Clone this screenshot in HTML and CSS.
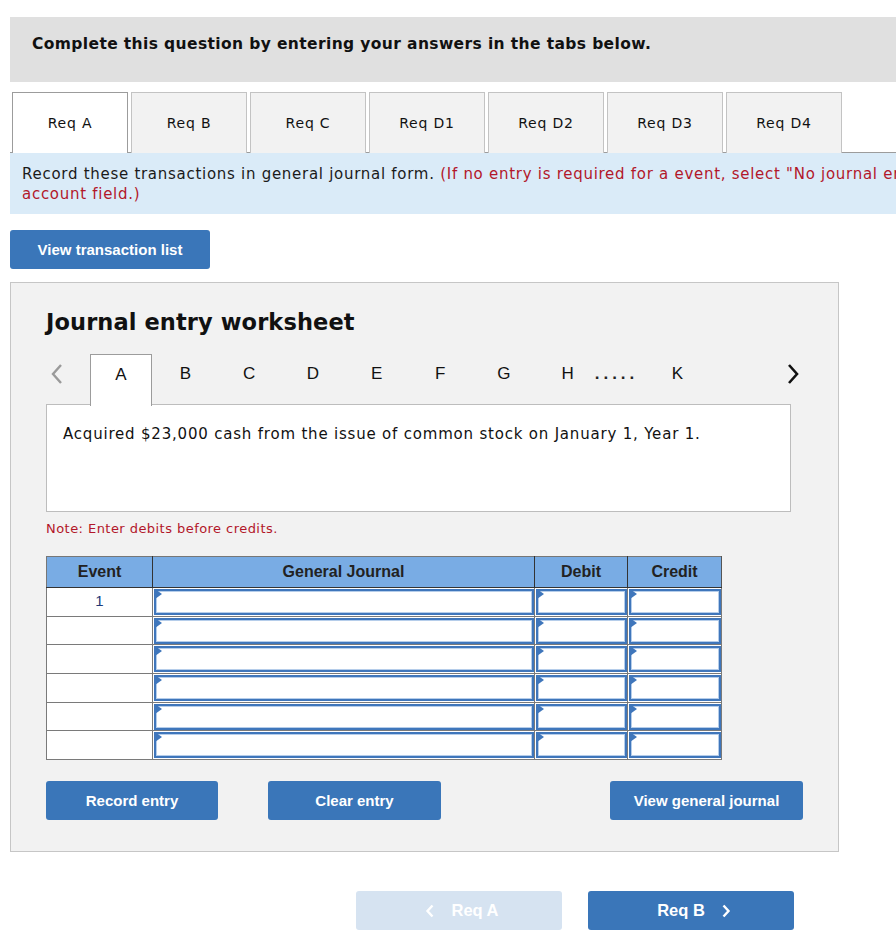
FILE: index.html
```html
<!DOCTYPE html>
<html>
<head>
<meta charset="utf-8">
<link rel="stylesheet" href="styles.css">
</head>
<body>
<div class="page">
  <div class="banner">Complete this question by entering your answers in the tabs below.</div>

  <div class="reqtabs">
    <div class="reqtab active">Req A</div>
    <div class="reqtab">Req B</div>
    <div class="reqtab">Req C</div>
    <div class="reqtab">Req D1</div>
    <div class="reqtab">Req D2</div>
    <div class="reqtab">Req D3</div>
    <div class="reqtab">Req D4</div>
  </div>

  <div class="instr">Record these transactions in general journal form. <span class="red">(If no entry is required for a event, select "No journal entry required" in the first<br>account field.)</span></div>

  <button class="btn btn-list">View transaction list</button>

  <div class="panel">
    <h2 class="title">Journal entry worksheet</h2>

    <div class="nav">
      <span class="chev chev-left"><svg width="14" height="22" viewBox="0 0 14 22"><path d="M11 2 L3 11 L11 20" fill="none" stroke="#9a9a9a" stroke-width="2.4"/></svg></span>
      <span class="slot active">A</span>
      <span class="slot">B</span>
      <span class="slot">C</span>
      <span class="slot">D</span>
      <span class="slot">E</span>
      <span class="slot">F</span>
      <span class="slot">G</span>
      <span class="slot">H</span>
      <span class="dots">.....</span>
      <span class="slot slot-k">K</span>
      <span class="chev chev-right"><svg width="14" height="22" viewBox="0 0 14 22"><path d="M3 2 L11 11 L3 20" fill="none" stroke="#111" stroke-width="2.6"/></svg></span>
    </div>

    <div class="desc">Acquired $23,000 cash from the issue of common stock on January 1, Year 1.</div>

    <div class="note">Note: Enter debits before credits.</div>

    <table class="journal">
      <thead>
        <tr>
          <th class="c-event">Event</th>
          <th class="c-gj">General Journal</th>
          <th class="c-amt">Debit</th>
          <th class="c-amt2">Credit</th>
        </tr>
      </thead>
      <tbody>
        <tr><td class="ev">1</td><td class="in"><div class="box"></div></td><td class="in"><div class="box"></div></td><td class="in"><div class="box"></div></td></tr>
        <tr><td class="ev"></td><td class="in"><div class="box"></div></td><td class="in"><div class="box"></div></td><td class="in"><div class="box"></div></td></tr>
        <tr><td class="ev"></td><td class="in"><div class="box"></div></td><td class="in"><div class="box"></div></td><td class="in"><div class="box"></div></td></tr>
        <tr><td class="ev"></td><td class="in"><div class="box"></div></td><td class="in"><div class="box"></div></td><td class="in"><div class="box"></div></td></tr>
        <tr><td class="ev"></td><td class="in"><div class="box"></div></td><td class="in"><div class="box"></div></td><td class="in"><div class="box"></div></td></tr>
        <tr><td class="ev"></td><td class="in"><div class="box"></div></td><td class="in"><div class="box"></div></td><td class="in"><div class="box"></div></td></tr>
      </tbody>
    </table>

    <div class="actions">
      <button class="btn btn-record">Record entry</button>
      <button class="btn btn-clear">Clear entry</button>
      <button class="btn btn-view">View general journal</button>
    </div>
  </div>

  <div class="bottom">
    <button class="btn btn-prev"><svg width="10" height="14" viewBox="0 0 10 14"><path d="M7.5 1.5 L2.5 7 L7.5 12.5" fill="none" stroke="#fff" stroke-width="2.4"/></svg><span>Req A</span></button>
    <button class="btn btn-next"><span>Req B</span><svg width="10" height="14" viewBox="0 0 10 14"><path d="M2.5 1.5 L7.5 7 L2.5 12.5" fill="none" stroke="#fff" stroke-width="2.4"/></svg></button>
  </div>
</div>
</body>
</html>
```

FILE: styles.css
```css
html, body {
  margin: 0;
  padding: 0;
  background: #ffffff;
  overflow: hidden;
}

.page {
  width: 1100px;
  padding: 17px 0 20px 10px;
  font-family: "DejaVu Sans", Verdana, sans-serif;
  color: #111;
}

.banner {
  background: #e0e0e0;
  height: 65px;
  box-sizing: border-box;
  padding: 18px 0 0 22px;
  font-size: 15.5px;
  font-weight: bold;
  letter-spacing: 0.38px;
}

.reqtabs {
  display: flex;
  gap: 3px;
  margin-top: 10px;
  padding-left: 2px;
  position: relative;
  z-index: 1;
}

.reqtab {
  width: 116px;
  height: 61px;
  box-sizing: border-box;
  border: 1px solid #c3c3c3;
  border-bottom: none;
  background: #f2f2f2;
  font-size: 14px;
  letter-spacing: 0.8px;
  display: flex;
  align-items: center;
  justify-content: center;
}

.reqtab.active {
  background: #ffffff;
  border-color: #9c9c9c;
}

.instr {
  background: #daebf8;
  border-top: 1px solid #9c9c9c;
  margin-top: -1px;
  height: 62px;
  box-sizing: border-box;
  padding: 12px 12px 0 12px;
  font-size: 15px;
  line-height: 19.5px;
  width: 1080px;
  white-space: nowrap;
  color: #1a1a1a;
  letter-spacing: 0.72px;
}

.instr .red {
  color: #b2172a;
}

.btn {
  border: none;
  border-radius: 3px;
  background: #3a76b9;
  color: #ffffff;
  font-family: "Liberation Sans", Arial, sans-serif;
  font-weight: bold;
  font-size: 15px;
  height: 39px;
  padding: 0;
  display: flex;
  align-items: center;
  justify-content: center;
  letter-spacing: 0;
}

.btn-list {
  margin-top: 16px;
  width: 200px;
}

.panel {
  margin-top: 13px;
  width: 829px;
  height: 570px;
  box-sizing: border-box;
  background: #f2f2f2;
  border: 1px solid #c6c6c6;
  padding: 0 0 0 35px;
}

.title {
  margin: 25px 0 0 0;
  font-size: 22.5px;
  font-weight: bold;
  line-height: 28px;
  letter-spacing: 0.1px;
}

.nav {
  margin-top: 18px;
  display: flex;
  align-items: stretch;
  height: 51px;
  width: 754px;
  font-family: "Liberation Sans", Arial, sans-serif;
  font-size: 17px;
  position: relative;
  z-index: 1;
}

.chev {
  display: flex;
  align-items: center;
  padding-bottom: 12px;
}

.chev-left {
  width: 44px;
  padding-left: 4px;
  box-sizing: border-box;
}

.chev-right {
  margin-left: auto;
}

.slot {
  width: 63.7px;
  flex: none;
  box-sizing: border-box;
  display: flex;
  align-items: center;
  justify-content: center;
  padding-bottom: 12px;
}

.slot.active {
  width: 62px;
  margin-right: 1.7px;
  background: #ffffff;
  border: 1px solid #9c9c9c;
  border-bottom: none;
  height: 52px;
}

.dots {
  width: 46px;
  margin-left: -8px;
  display: flex;
  align-items: center;
  justify-content: center;
  padding-bottom: 12px;
  padding-left: 4px;
  box-sizing: border-box;
  font-weight: bold;
  letter-spacing: 4px;
  color: #222;
}

.slot-k {
  width: 80px;
}

.desc {
  width: 745px;
  height: 108px;
  box-sizing: border-box;
  background: #ffffff;
  border: 1px solid #bdbdbd;
  margin-top: -1px;
  padding: 19px 0 0 16px;
  font-size: 15px;
  line-height: 20px;
  letter-spacing: 0.8px;
}

.note {
  margin-top: 8px;
  font-size: 13px;
  line-height: 18px;
  color: #b2172a;
  letter-spacing: 0.45px;
}

.journal {
  margin-top: 18px;
  border-collapse: collapse;
  width: 676px;
  table-layout: fixed;
  font-family: "Liberation Sans", Arial, sans-serif;
}

.journal th {
  background: #79ace4;
  height: 31px;
  font-size: 16px;
  font-weight: bold;
  color: #222;
  border: 1px solid #333;
  border-top-color: #777;
  padding: 0;
  box-sizing: border-box;
}

.journal th:first-child { border-left-color: #777; }
.journal th:last-child { border-right-color: #555; }

.c-event { width: 106px; }
.c-gj { width: 382px; }
.c-amt { width: 93px; }
.c-amt2 { width: 94px; }

.journal td {
  height: 28.7px;
  padding: 0;
  border: 1px solid #7a7a7a;
  background: #ffffff;
  box-sizing: border-box;
}

.journal td.ev {
  text-align: center;
  font-size: 15px;
  color: #223a78;
  vertical-align: top;
  padding-top: 4px;
}

.journal td.in {
  padding: 1px 0 0 1px;
  vertical-align: top;
}

.box {
  position: relative;
  height: 26px;
  box-sizing: border-box;
  border: 2px solid #3f76bb;
  box-shadow: inset 0 0 0 1px #b5cdea;
  background: #ffffff;
}

.box::before {
  content: "";
  position: absolute;
  left: -1px;
  top: -2px;
  width: 0;
  height: 0;
  border-top: 5px solid transparent;
  border-bottom: 5px solid transparent;
  border-left: 7px solid #3f76bb;
}

.actions {
  display: flex;
  margin-top: 21px;
  width: 757px;
}

.btn-record { width: 172px; }
.btn-clear { width: 173px; margin-left: 50px; }
.btn-view { width: 193px; margin-left: auto; }

.bottom {
  display: flex;
  gap: 26px;
  margin-top: 39px;
  padding-left: 346px;
}

.btn-prev, .btn-next {
  width: 206px;
  font-size: 16.5px;
}

.btn-prev {
  background: #d6e3f1;
  gap: 16px;
  padding-left: 6px;
}

.btn-next {
  gap: 16px;
  padding-left: 6px;
}
```
